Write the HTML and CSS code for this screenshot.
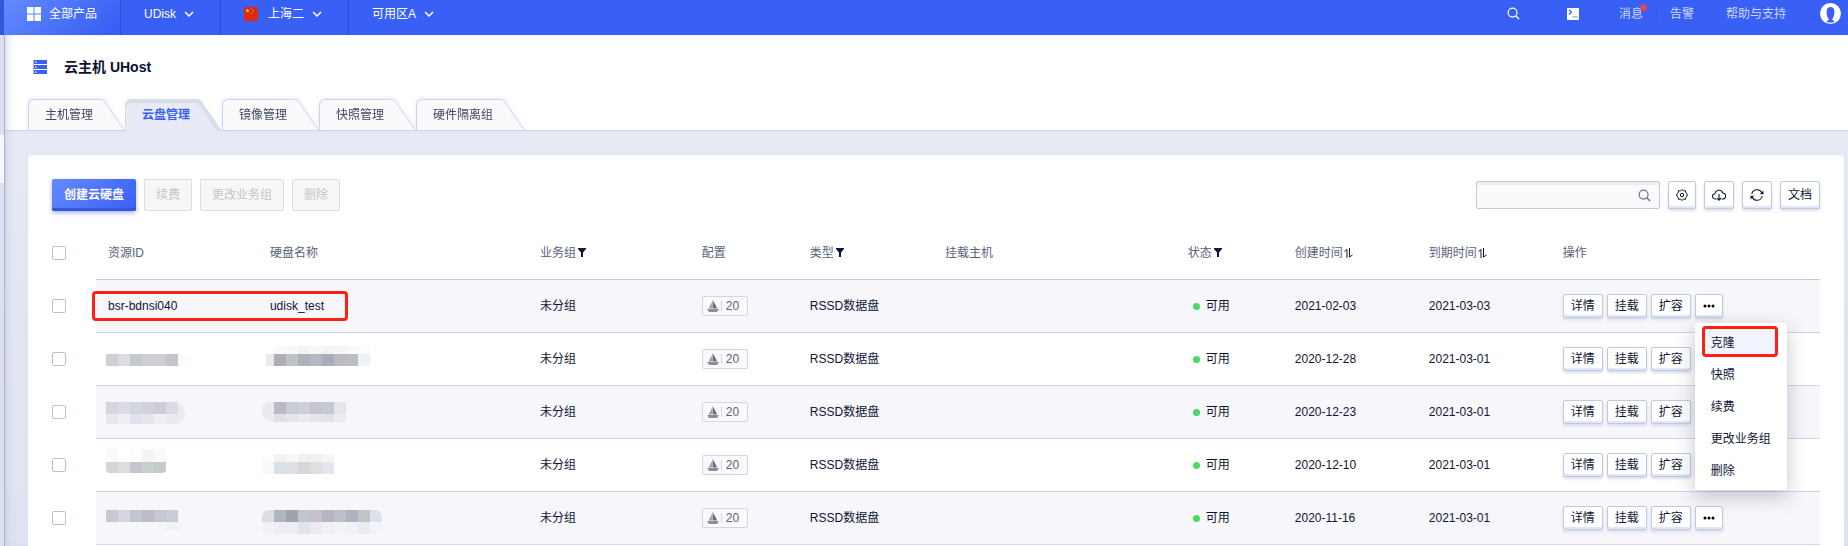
FILE: index.html
```html
<!DOCTYPE html>
<html lang="zh-CN">
<head>
<meta charset="utf-8">
<title>云主机 UHost</title>
<link rel="stylesheet" href="styles.css">
</head>
<body>
<svg class="defs" aria-hidden="true">
  <symbol id="chevron" viewBox="0 0 10 6"><path d="M1 1l4 4 4-4" fill="none" stroke="currentColor" stroke-width="1.5"/></symbol>
  <symbol id="search" viewBox="0 0 14 14"><circle cx="6" cy="6" r="4.8" fill="none" stroke="currentColor" stroke-width="1.3"/><path d="M9.4 9.4l3.600 3.600" stroke="currentColor" stroke-width="1.5"/></symbol>
  <symbol id="funnel" viewBox="0 0 8 9"><path d="M0 0h8v1L5 4.500V9H3V4.500L0 1z" fill="currentColor"/></symbol>
  <symbol id="sort" viewBox="0 0 9 10"><path d="M.5 3.500L3 1.500V10M5.500 0v9L8.500 7" fill="none" stroke="currentColor"/></symbol>
  <symbol id="boat" viewBox="0 0 12 12"><path d="M5 2L1.500 8.500H5z" fill="#a2a5b0"/><path d="M5.500 0c1.500 3 3.500 5 4.500 8.500H5.500z" fill="#6a6f80"/><path d="M0 9h12l-2 3H2z" fill="#8b8f9d"/></symbol>
  <symbol id="dots" viewBox="0 0 12 4"><circle cx="2" cy="2" r="1.500"/><circle cx="6" cy="2" r="1.500"/><circle cx="10" cy="2" r="1.500"/></symbol>
  <symbol id="tail" viewBox="0 0 25 32"><path class="tail-fill" d="M0 0C3 0 4 1 5 3L25 32H0z"/><path class="tail-line" d="M0 .5C2.500 .5 3.500 1.500 4.500 3L24.500 32" fill="none"/></symbol>
</svg>

<header class="topbar">
  <button class="top-item products" type="button">
    <svg width="14" height="14" viewBox="0 0 14 14" aria-hidden="true"><path d="M0 0h6.500v6.500H0zM7.500 0H14v6.500H7.500zM0 7.500h6.500V14H0zM7.500 7.500H14V14H7.500z" fill="#fff"/></svg>
    <span>全部产品</span>
  </button>
  <button class="top-item" type="button"><span>UDisk</span><svg class="chevron" aria-hidden="true"><use href="#chevron"/></svg></button>
  <button class="top-item" type="button">
    <svg class="flag" viewBox="0 0 14 14" aria-hidden="true"><rect width="14" height="14" rx="2" fill="#de2910"/><path d="M3.500 1.500l.6 1.500 1.500.1-1.200 1 .4 1.500-1.300-.8-1.300.8.4-1.500-1.200-1 1.500-.1z" fill="#ffde00"/><path d="M7 1.500h1v1H7zM8.500 3h1v1h-1zM8.500 4.800h1v1h-1zM7 6h1v1H7z" fill="#e89a10"/></svg>
    <span>上海二</span><svg class="chevron" aria-hidden="true"><use href="#chevron"/></svg>
  </button>
  <button class="top-item last" type="button"><span>可用区A</span><svg class="chevron" aria-hidden="true"><use href="#chevron"/></svg></button>
  <nav class="top-right">
    <button class="icon-btn" type="button" aria-label="搜索"><svg width="13" height="13"><use href="#search"/></svg></button>
    <button class="icon-btn terminal" type="button" aria-label="终端"><svg width="12" height="12" viewBox="0 0 12 12"><rect width="12" height="12" rx="1" fill="#fff"/><path d="M2 2l2.500 2.200L2 6.500" fill="none" stroke="#3860f4" stroke-width="1.200"/><path d="M5.500 8.800h5" stroke="#a9bbfb" stroke-width="1.600"/></svg></button>
    <a class="messages" href="#">消息<i class="badge"></i></a>
    <i class="sep"></i>
    <a class="alerts" href="#">告警</a>
    <a class="help" href="#">帮助与支持</a>
    <button class="icon-btn" type="button" aria-label="账户"><svg width="21" height="21" viewBox="0 0 21 21"><circle cx="10.500" cy="10.500" r="10.500" fill="#fff"/><path d="M6.500 18.800c.5-1 2.200-1.300 2.200-2.800C6.800 13.500 6.600 11 6.600 8.500 6.600 5.500 8.200 4 10.500 4s3.900 1.500 3.900 4.500c0 2.500-.2 5-2.100 7.500 0 1.500 1.700 1.800 2.200 2.800-2 1.200-6 1.200-8 0z" fill="#3860f4"/></svg></button>
  </nav>
</header>

<div class="shell">
  <aside class="rail"><div class="rail-mark"></div></aside>
  <main class="main">
    <div class="head">
      <h1 class="title">
        <svg width="14" height="14" viewBox="0 0 14 14" aria-hidden="true"><path d="M0 0h14v4H0zM0 5h14v4H0zM0 10h14v4H0z" fill="#3860f4"/><path d="M0 0h1v14H0z" fill="#a9b6fb"/><path d="M2 1.500h1.500v1.200H2zM2 6.500h1.500v1.200H2zM2 11.500h1.500v1.200H2z" fill="#fff"/></svg>
        <span>云主机 UHost</span>
      </h1>
      <nav class="tabs">
        <a class="tab" href="#"><span class="tab-label">主机管理</span><svg class="tail"><use href="#tail"/></svg></a>
        <a class="tab active" href="#"><span class="tab-label">云盘管理</span><svg class="tail" viewBox="0 0 25 32"><path d="M0 0C3 0 4 1 5 3L25 32H0z" fill="#d9dde7"/><path d="M0 4L20 32H0z" fill="#e8ebf5"/></svg></a>
        <a class="tab" href="#"><span class="tab-label">镜像管理</span><svg class="tail"><use href="#tail"/></svg></a>
        <a class="tab" href="#"><span class="tab-label">快照管理</span><svg class="tail"><use href="#tail"/></svg></a>
        <a class="tab" href="#"><span class="tab-label">硬件隔离组</span><svg class="tail"><use href="#tail"/></svg></a>
      </nav>
    </div>

    <div class="body">
      <section class="card">
        <div class="toolbar">
          <button class="btn primary" type="button">创建云硬盘</button>
          <button class="btn" type="button" disabled>续费</button>
          <button class="btn" type="button" disabled>更改业务组</button>
          <button class="btn" type="button" disabled>删除</button>
          <div class="tools">
            <label class="search"><input class="search-input" type="text" aria-label="搜索云盘"><svg width="13" height="13" aria-hidden="true"><use href="#search"/></svg></label>
            <button class="tool" type="button" aria-label="设置"><svg width="12" height="12" viewBox="0 0 12 12"><path d="M6 .6l1.500 1.200 2-.1.300 1.900L11.400 5 10.700 6l.7 1-1.600 1.400-.3 1.900-2-.1L6 11.400l-1.500-1.200-2 .1-.3-1.900L.6 7l.7-1-.7-1 1.600-1.400.3-1.900 2 .1z" fill="none" stroke="currentColor"/><circle cx="6" cy="6" r="1.700" fill="none" stroke="currentColor"/></svg></button>
            <button class="tool" type="button" aria-label="下载"><svg width="14" height="12" viewBox="0 0 14 12"><path d="M4.500 10H3.300A2.600 2.600 0 0 1 3 4.800 4 4 0 0 1 10.800 4 3 3 0 0 1 10.500 10H9.500M7 5v6M5 9.200l2 2 2-2" fill="none" stroke="currentColor" stroke-width="1.100"/></svg></button>
            <button class="tool" type="button" aria-label="刷新"><svg width="14" height="12" viewBox="0 0 14 12"><path d="M1.800 5A5.300 5.300 0 0 1 11.800 3.800M12.200 7A5.300 5.300 0 0 1 2.200 8.200" fill="none" stroke="currentColor" stroke-width="1.100"/><path d="M13.500 1.500v3.700H9.800zM.5 10.500V6.800h3.700z" fill="currentColor"/></svg></button>
            <button class="tool" type="button">文档</button>
          </div>
        </div>

        <div class="table-wrap">
        <table class="grid">
          <colgroup><col class="c-check"><col class="c-id"><col class="c-name"><col class="c-group"><col class="c-spec"><col class="c-type"><col class="c-host"><col class="c-state"><col class="c-date"><col class="c-date"><col></colgroup>
          <thead>
            <tr>
              <th class="check"><input type="checkbox" aria-label="全选"></th>
              <th>资源ID</th><th>硬盘名称</th>
              <th>业务组<svg class="funnel"><use href="#funnel"/></svg></th>
              <th>配置</th>
              <th>类型<svg class="funnel"><use href="#funnel"/></svg></th>
              <th>挂载主机</th>
              <th>状态<svg class="funnel"><use href="#funnel"/></svg></th>
              <th>创建时间<svg class="sort"><use href="#sort"/></svg></th>
              <th>到期时间<svg class="sort"><use href="#sort"/></svg></th>
              <th>操作</th>
            </tr>
          </thead>
          <tbody>
            <tr>
              <td class="check"><input type="checkbox" aria-label="选择 bsr-bdnsi040"></td>
              <td>bsr-bdnsi040</td><td>udisk_test</td><td>未分组</td>
              <td><span class="spec"><svg class="boat"><use href="#boat"/></svg><span class="spec-num">20</span></span></td>
              <td>RSSD数据盘</td><td></td>
              <td><span class="state">可用</span></td><td>2021-02-03</td><td>2021-03-03</td>
              <td><div class="ops"><button class="op" type="button">详情</button><button class="op" type="button">挂载</button><button class="op" type="button">扩容</button>
                <div class="more"><button class="op dots" type="button" aria-label="更多"><svg width="12" height="4"><use href="#dots"/></svg></button>
                  <div class="menu">
                    <button class="menu-item current" type="button">克隆</button>
                    <button class="menu-item" type="button">快照</button>
                    <button class="menu-item" type="button">续费</button>
                    <button class="menu-item" type="button">更改业务组</button>
                    <button class="menu-item" type="button">删除</button>
                    <div class="mark mark-menu"></div>
                  </div>
                </div></div></td>
            </tr>
            <tr>
              <td class="check"><input type="checkbox" aria-label="选择第2行"></td>
              <td class="mosaic-id"><svg class="mosaic round-tip" data-bands="0,15,12,0:d0cfd4 dcdde1 c3cad2 cfced4 cbd0d3 c5c2c9 f5fbff"></svg></td>
              <td class="mosaic-name"><svg class="mosaic" data-bands="12,7,8,0:fafafa f8f8f8 f2f3f4 f7f7f8 f1f3f4 f4f5f6 f9f9f9 fcfcfc|0,15,12,4:eae9e9 aeadb8 bdc3c6 b0b0ba b3b9c3 a6afb7 bdb8c2 bbbdc7 edf2f6"></svg></td>
              <td>未分组</td>
              <td><span class="spec"><svg class="boat"><use href="#boat"/></svg><span class="spec-num">20</span></span></td>
              <td>RSSD数据盘</td><td></td>
              <td><span class="state">可用</span></td><td>2020-12-28</td><td>2021-03-01</td>
              <td><div class="ops"><button class="op" type="button">详情</button><button class="op" type="button">挂载</button><button class="op" type="button">扩容</button><button class="op dots" type="button" aria-label="更多"><svg width="12" height="4"><use href="#dots"/></svg></button></div></td>
            </tr>
            <tr>
              <td class="check"><input type="checkbox" aria-label="选择第3行"></td>
              <td class="mosaic-id"><svg class="mosaic round-right" data-bands="0,10,12,0:d7d5df dbdce1 d0d8e2 d1d2d7 cfccd8 d9dce4 ebecf1|0,22,10,0:e8e7ee eeeef4 e0e1ea e5e5eb efeef5 ebeaf1 ebecf2"></svg></td>
              <td class="mosaic-name"><svg class="mosaic round-left" data-bands="0,10,12,0:e9e9ee b9bac8 c9ccd4 cdd0d9 c8c4cf c5cad1 e3e4ec|0,22,8,0:ebebf0 e0dfe6 e4e5ea e9ebef e5e5eb e1e3e8 ebedf2"></svg></td>
              <td>未分组</td>
              <td><span class="spec"><svg class="boat"><use href="#boat"/></svg><span class="spec-num">20</span></span></td>
              <td>RSSD数据盘</td><td></td>
              <td><span class="state">可用</span></td><td>2020-12-23</td><td>2021-03-01</td>
              <td><div class="ops"><button class="op" type="button">详情</button><button class="op" type="button">挂载</button><button class="op" type="button">扩容</button><button class="op dots" type="button" aria-label="更多"><svg width="12" height="4"><use href="#dots"/></svg></button></div></td>
            </tr>
            <tr>
              <td class="check"><input type="checkbox" aria-label="选择第4行"></td>
              <td class="mosaic-id"><svg class="mosaic round-low" data-bands="0,4,13,0:fafafa ffffff fdfdfd f3f5f4 fafafa|0,17,11,0:d4d3d8 dedee2 c3c7cb c9ced1 c5cace"></svg></td>
              <td class="mosaic-name"><svg class="mosaic" data-bands="0,9,8,0:fdfdfd f0f2f3 f5f6f8 eef0f1 eff1f1 f4f5f6|0,17,12,0:faf9f4 d9e1e8 dde1e3 d5d6db dde0e1 e3e6ec"></svg></td>
              <td>未分组</td>
              <td><span class="spec"><svg class="boat"><use href="#boat"/></svg><span class="spec-num">20</span></span></td>
              <td>RSSD数据盘</td><td></td>
              <td><span class="state">可用</span></td><td>2020-12-10</td><td>2021-03-01</td>
              <td><div class="ops"><button class="op" type="button">详情</button><button class="op" type="button">挂载</button><button class="op" type="button">扩容</button><button class="op dots" type="button" aria-label="更多"><svg width="12" height="4"><use href="#dots"/></svg></button></div></td>
            </tr>
            <tr>
              <td class="check"><input type="checkbox" aria-label="选择第5行"></td>
              <td class="mosaic-id"><svg class="mosaic" data-bands="0,12,12,0:c9c7d1 d4d7e0 c1c5cd bebcc7 c6c9d2 c9cdd6|60,24,8,0:f2f1f6"></svg></td>
              <td class="mosaic-name"><svg class="mosaic round-wide" data-bands="0,12,12,0:e0dae1 aeb6c0 9fa3ad c2c5d2 c4c0cc b4b7c1 bcbecb b0b2c0 c0c4c7 dde0e9|0,24,12,0:f1f1f6 ededf3 eeedf3 e2e2ec ebebf1 f0f0f5 f4f3f8 f2f1f7 ebecf2 f4f3f9"></svg></td>
              <td>未分组</td>
              <td><span class="spec"><svg class="boat"><use href="#boat"/></svg><span class="spec-num">20</span></span></td>
              <td>RSSD数据盘</td><td></td>
              <td><span class="state">可用</span></td><td>2020-11-16</td><td>2021-03-01</td>
              <td><div class="ops"><button class="op" type="button">详情</button><button class="op" type="button">挂载</button><button class="op" type="button">扩容</button><button class="op dots" type="button" aria-label="更多"><svg width="12" height="4"><use href="#dots"/></svg></button></div></td>
            </tr>
          </tbody>
        </table>
        <div class="mark mark-row"></div>
        </div>
      </section>
    </div>
  </main>
</div>
<script src="mosaic.js"></script>
</body>
</html>
```

FILE: styles.css
```css
* { box-sizing: border-box; }

body {
  margin: 0;
  min-height: 100vh;
  display: flex;
  flex-direction: column;
  font: 12px/20px "Liberation Sans", "Noto Sans CJK SC", sans-serif;
  color: #0f1535;
  background: #fff;
}

button, input { font: inherit; color: inherit; margin: 0; }
button { padding: 0; border: 0; background: none; white-space: nowrap; }
a { color: inherit; text-decoration: none; }
svg { display: block; flex: none; }
.defs { display: none; }

/* Top bar */
.topbar {
  display: flex;
  height: 35px;
  padding-left: 4px;
  background: linear-gradient(90deg, #3157dc 4px, #3860f4 4px);
  color: #fff;
}
.top-item {
  display: flex;
  align-items: center;
  padding: 0 26px 8px 23px;
  border-right: 1px solid #2e4fc4;
}
.top-item.last { border-right: 0; }
.products {
  gap: 8px;
  padding: 0 23px 8px;
  background: linear-gradient(135deg, #648aff, #3860f4 90%);
}
.chevron { width: 10px; height: 6px; margin-left: 8px; }
.flag { width: 14px; height: 14px; margin-right: 10px; }
.top-right {
  margin-left: auto;
  display: flex;
  align-items: center;
  padding: 0 7px 8px 0;
  color: #cdd7fd;
}
.icon-btn { color: #fff; }
.terminal { margin: 0 40px 0 47px; }
.messages { position: relative; }
.badge {
  position: absolute;
  top: 0;
  right: -4px;
  width: 7px;
  height: 7px;
  border-radius: 50%;
  background: #d5485e;
}
.sep { width: 1px; height: 11px; margin: 0 13px; background: #3156d8; }
.help { margin: 0 34px 0 32px; }

/* Shell */
.shell { flex: 1; display: flex; }
.rail {
  width: 5px;
  padding-top: 100px;
  border-right: 1px solid #a9b2cc;
  background: #dcdff0;
}
.rail-mark { height: 48px; background: #f6f9ff; }
.main {
  flex: 1;
  min-width: 0;
  display: flex;
  flex-direction: column;
  box-shadow: inset 6px 0 8px -4px #d4d9ea;
}

.head {
  padding: 22px 0 0 23px;
  border-bottom: 1px solid #cdd4e8;
}
.title {
  display: flex;
  align-items: center;
  gap: 17px;
  margin: 0 0 22px 5px;
  font-size: 14px;
  line-height: 20px;
  color: #0b1033;
}

.tabs { display: flex; margin-bottom: -1px; }
.tab {
  display: flex;
  height: 32px;
  color: #40485f;
  filter: drop-shadow(0 -1px 2px #e6eaff);
}
.tab-label {
  padding: 5px 7px 0 16px;
  border: 1px solid #cdd3e9;
  border-width: 1px 0 1px 1px;
  border-radius: 6px 0 0 0;
  background: #fafafd;
}
.tail { width: 25px; height: 32px; }
.tail-fill { fill: #fafafd; }
.tail-line { stroke: #cdd3e9; }
.tab:not(.active) .tail { border-bottom: 1px solid #cdd3e9; }
.tab.active { color: #3860f4; font-weight: bold; filter: none; }
.tab.active .tab-label {
  border-color: #d4d9e6;
  border-bottom-color: #e8ebf5;
  background: #e8ebf5;
  box-shadow: inset 0 3px 0 #d9dde7;
}

.body {
  flex: 1;
  display: flex;
  padding: 24px 4px 0 23px;
  background: linear-gradient(#e8ebf5, #dfe2f0);
  box-shadow: inset 6px 0 8px -4px #c9cfe2;
}
.card {
  flex: 1;
  min-width: 0;
  padding: 24px 24px 0;
  border-radius: 4px 4px 0 0;
  background: #fff;
  box-shadow: 0 0 6px #dde1ed;
}

/* Toolbar */
.toolbar { display: flex; align-items: center; gap: 8px; }
.btn {
  height: 32px;
  padding: 0 11px;
  border: 1px solid #dcdde0;
  border-radius: 2px;
  background: #f7f7f8;
  color: #c5c6cb;
}
.btn.primary {
  padding: 0 12px;
  border: 0;
  background: linear-gradient(135deg, #648aff, #3860f4);
  box-shadow: inset 0 -3px 0 #3456d6, 0 2px 4px #a9b6f0;
  color: #fff;
  font-weight: bold;
}
.tools { margin-left: auto; display: flex; gap: 8px; }
.search {
  display: flex;
  align-items: center;
  width: 184px;
  height: 28px;
  padding-right: 8px;
  border: 1px solid #c1c9dd;
  border-radius: 2px;
  background: #fafafc;
  box-shadow: inset 0 3px 0 #ececf1;
  color: #6a7388;
}
.search-input {
  flex: 1;
  min-width: 0;
  padding: 0 8px;
  border: 0;
  outline: 0;
  background: none;
}
.tool, .op {
  display: flex;
  align-items: center;
  justify-content: center;
  padding: 0 7px;
  border: 1px solid #c1c9dd;
  border-radius: 2px;
  background: #fff;
  box-shadow: inset 0 -2px 0 #dfe6fd, 0 2px 3px #dcdee6;
}
.tool { height: 28px; }

/* Table */
.table-wrap { position: relative; margin-top: 16px; }
.grid {
  width: 100%;
  table-layout: fixed;
  border-collapse: separate;
  border-spacing: 0;
}
.c-check { width: 44px; }
.c-id, .c-group { width: 9.16%; }
.c-name { width: 15.27%; }
.c-spec { width: 6.11%; }
.c-type { width: 7.64%; }
.c-host { width: 13.74%; }
.c-state { width: 6.05%; }
.c-date { width: 7.58%; }

.grid th, .grid td {
  height: 53px;
  padding: 0 0 0 12px;
  border-bottom: 1px solid #d0d5ea;
  text-align: left;
  font-weight: normal;
  white-space: nowrap;
}
.grid th { color: #5a6378; border-bottom-color: #c1c9dd; }
.grid tbody tr:nth-child(odd) { background: #f6f6fb; }
.grid .check {
  padding: 0;
  border-bottom-color: #fff;
  background: #fff;
}
.check input {
  appearance: none;
  display: block;
  width: 14px;
  height: 14px;
  border: 1px solid #b9c2da;
  border-radius: 2px;
  background: #fff;
}
.funnel { display: inline-block; width: 8px; height: 9px; margin-left: 2px; color: #0f1535; }
.sort { display: inline-block; width: 9px; height: 10px; margin-left: 1px; vertical-align: -1px; color: #0f1535; }

.spec {
  display: flex;
  align-items: center;
  width: 46px;
  height: 20px;
  padding-left: 4px;
  border: 1px solid #d0d5ea;
  border-radius: 2px;
  background: #fafafd;
  color: #5a6378;
}
.boat { width: 12px; height: 12px; }
.spec-num {
  margin-left: 2px;
  padding-left: 4px;
  border-left: 1px solid #d0d5ea;
  line-height: 10px;
}
.state { display: flex; align-items: center; gap: 6px; padding-left: 5px; }
.state::before {
  content: "";
  width: 7px;
  height: 7px;
  border-radius: 50%;
  background: #4cd964;
}

.ops { display: flex; gap: 4px; }
.op { height: 24px; }

/* Drop-down menu */
.more { position: relative; }
.menu {
  position: absolute;
  z-index: 2;
  top: 29px;
  left: 0;
  display: flex;
  flex-direction: column;
  gap: 2px;
  padding: 5px 8px 4px;
  border-radius: 2px;
  background: #fff;
  box-shadow: 0 6px 20px rgba(60, 66, 90, .3);
}
.menu-item { height: 30px; padding: 0 8px; text-align: left; }
.menu-item.current { background: #f2f5ff; }

.mark {
  position: absolute;
  border: 3px solid #ff1f14;
  border-radius: 4px;
  pointer-events: none;
}
.mark-menu { top: 3px; left: 7px; right: 9px; height: 31px; }
.mark-row { top: 64px; left: 40px; width: 256px; height: 30px; }

/* Masked values */
.grid .mosaic-id { padding-left: 10px; }
.grid .mosaic-name { padding-left: 4px; }
.mosaic { width: 120px; height: 40px; }
.round-tip { clip-path: inset(15px 40px 13px 0 round 0 6px 6px 0); }
.round-right { clip-path: inset(10px 41px 8px 0 round 0 11px 11px 0); }
.round-left { clip-path: inset(10px 36px 10px 0 round 8px 0 0 10px); }
.round-low { clip-path: inset(4px 60px 12px 0 round 4px); }
.round-wide { clip-path: inset(12px 0 4px 0 round 7px); }
```

FILE: mosaic.js
```js
// Each band is "x,y,height,offset:colours"; cells are 12px wide and the first is cut by offset.
document.querySelectorAll('.mosaic').forEach(function (svg) {
  svg.dataset.bands.split('|').forEach(function (band) {
    var parts = band.split(':');
    var box = parts[0].split(',').map(Number);
    parts[1].split(' ').forEach(function (colour, i) {
      var cut = i === 0 ? box[3] : 0;
      var rect = document.createElementNS('http://www.w3.org/2000/svg', 'rect');
      rect.setAttribute('x', box[0] + i * 12 + cut);
      rect.setAttribute('y', box[1]);
      rect.setAttribute('width', 12 - cut);
      rect.setAttribute('height', box[2]);
      rect.setAttribute('fill', '#' + colour);
      svg.appendChild(rect);
    });
  });
});
```
